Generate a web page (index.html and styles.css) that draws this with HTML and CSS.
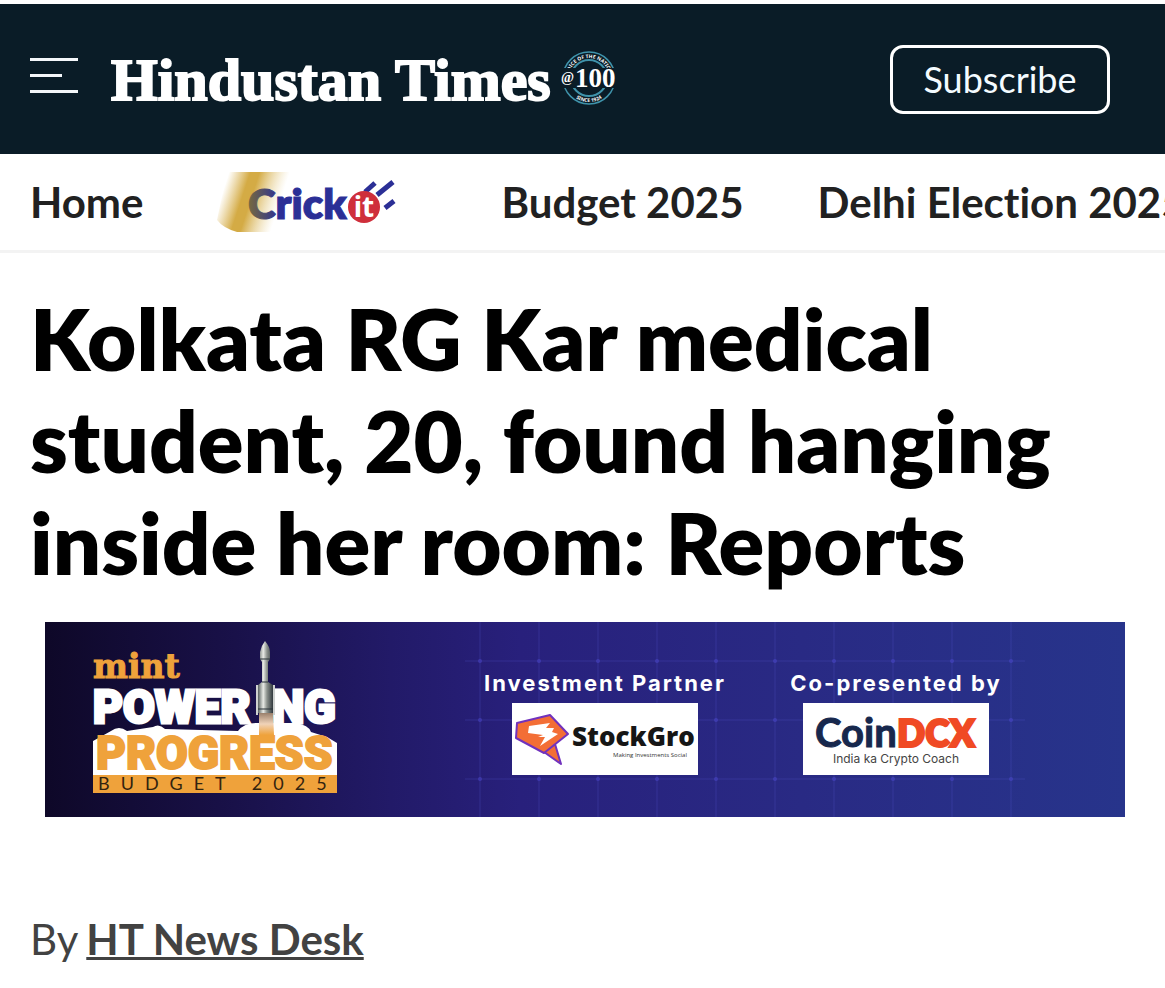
FILE: index.html
```html
<!DOCTYPE html>
<html lang="en">
<head>
  <meta charset="UTF-8">
  <meta name="viewport" content="width=device-width, initial-scale=1">
  <title>Kolkata RG Kar medical student, 20, found hanging inside her room: Reports</title>
  <link rel="stylesheet" href="styles.css">
</head>
<body>

  <header class="header">
    <button class="menu-btn" type="button" aria-label="Menu">
      <span></span><span class="short"></span><span></span>
    </button>
    <a class="logo" href="#" aria-label="Hindustan Times">
      <svg width="508" height="64" viewBox="0 0 508 64">
        <text class="logo-text" x="1" y="53">Hindustan Times</text>
        <defs>
          <path id="arcTop" d="M458.500 31.500a20 20 0 0 1 41 0"/>
          <path id="arcBottom" d="M455 31a24 24 0 0 0 48 0"/>
        </defs>
        <circle cx="479" cy="31" r="26" fill="none" stroke="#3f93ab" stroke-width="1.500"/>
        <circle cx="479" cy="31" r="18" fill="none" stroke="#3f93ab" stroke-width="2"/>
        <text class="badge-ring"><textPath href="#arcTop" startOffset="50%" text-anchor="middle">VOICE OF THE NATION</textPath></text>
        <text class="badge-ring"><textPath href="#arcBottom" startOffset="50%" text-anchor="middle">SINCE 1924</textPath></text>
        <path fill="#0a1c27" d="M451 21h55v20h-55z"/>
        <text class="badge-at" x="451" y="35">@</text>
        <text class="badge-num" x="465" y="40">100</text>
      </svg>
    </a>
    <button class="subscribe" type="button">Subscribe</button>
  </header>

  <nav class="nav">
    <a href="#">Home</a>
    <a href="#" class="crickit" aria-label="Crickit">
      <svg width="210" height="60" viewBox="0 0 210 60">
        <defs>
          <linearGradient id="gold" gradientUnits="userSpaceOnUse" x1="5" y1="22" x2="60" y2="40">
            <stop offset="0" stop-color="#d8b04c" stop-opacity="0"/>
            <stop offset="0.350" stop-color="#d4ab45"/>
            <stop offset="0.500" stop-color="#d4ab45"/>
            <stop offset="1" stop-color="#e8d294" stop-opacity="0"/>
          </linearGradient>
          <linearGradient id="ink" gradientUnits="userSpaceOnUse" x1="32" y1="0" x2="62" y2="0">
            <stop offset="0" stop-color="#75683f"/>
            <stop offset="1" stop-color="#2b2f96"/>
          </linearGradient>
        </defs>
        <path d="M10 0H76V60H20Q6 56 0 48Z" fill="url(#gold)"/>
        <text class="crick" x="31" y="47" fill="url(#ink)" stroke="url(#ink)">Crick</text>
        <g stroke="#2b2f96" stroke-width="5">
          <path d="M148 20l10-9M160 23l16-13M168 36l9-7"/>
        </g>
        <circle cx="147" cy="35" r="16" fill="#cf2f3b"/>
        <text class="it" x="147" y="45" text-anchor="middle">it</text>
      </svg>
    </a>
    <a href="#">Budget 2025</a>
    <a href="#">Delhi Election 2025</a>
  </nav>

  <main class="story">
    <h1>Kolkata RG Kar medical student, 20, found hanging inside her room: Reports</h1>

    <a class="banner" href="#">
      <svg class="banner-grid" aria-hidden="true">
        <defs>
          <pattern id="cells" width="59" height="59" patternUnits="userSpaceOnUse" x="52" y="10">
            <path d="M29 0V59M0 29H59" stroke="#5050c8" stroke-opacity="0.150" stroke-width="2"/>
            <circle cx="29" cy="29" r="2" fill="#5450e0" fill-opacity="0.400"/>
          </pattern>
        </defs>
        <rect x="420" width="560" height="100%" fill="url(#cells)"/>
      </svg>

      <svg class="mint" width="244" height="154" viewBox="0 0 244 154">
        <defs>
          <linearGradient id="metal" x1="0" x2="1">
            <stop offset="0" stop-color="#57605f"/>
            <stop offset="0.350" stop-color="#e9ebe6"/>
            <stop offset="0.600" stop-color="#8b918c"/>
            <stop offset="1" stop-color="#30383d"/>
          </linearGradient>
          <linearGradient id="flame" x1="0" y1="0" x2="0" y2="1">
            <stop offset="0" stop-color="#9a806c"/>
            <stop offset="0.500" stop-color="#f0d3b8"/>
            <stop offset="1" stop-color="#efa23b"/>
          </linearGradient>
        </defs>
        <path fill="#fff" d="M0 102L18 92Q26 86 34 92L60 88Q66 84 72 90L145 92Q151 84 163 84H202Q216 86 218 93L234 98L244 104V138H0Z"/>
        <text class="mint-name" x="0" y="39">mint</text>
        <text class="power" x="0" y="84">POWER</text>
        <text class="power" x="179" y="84">NG</text>
        <text class="progress" x="3" y="130">PROGRESS</text>
        <rect y="136" width="244" height="18" fill="#efa23b"/>
        <text class="budget" x="5" y="151">BUDGET 2025</text>
        <path fill="url(#flame)" d="M166 74h14l1 22h-15z"/>
        <path fill="url(#metal)" d="M172 2Q177 8 177 13V20L175 23V43L180 46V74H165V46L169 43V23L167 20V13Q168 7 172 2Z"/>
        <path stroke="#cfd2d0" stroke-width="2" d="M164 46v30M181 46v30"/>
        <path stroke="#263036" d="M167 20h10M169 43h6M165 70h15"/>
      </svg>

      <span class="partner">
        <span class="partner-label">Investment Partner</span>
        <svg class="card" width="186" height="72" viewBox="0 0 186 72">
          <g stroke="#7132bd" stroke-width="2" stroke-linejoin="round" fill="#f36e36">
            <path d="M43 41L49 61L32 49Z"/>
            <path d="M5 20L38 12L56 31L32 50L4 35Z"/>
          </g>
          <path fill="#fff" d="M17 23L38 20L34 25H42L40 29L46 31L28 43L33 34H26L31 32L16 30Z"/>
          <text class="stockgro" x="60" y="43">StockGro</text>
          <text class="stock-sub" x="101" y="54">Making Investments Social</text>
        </svg>
      </span>

      <span class="partner">
        <span class="partner-label">Co-presented by</span>
        <svg class="card" width="186" height="72" viewBox="0 0 186 72">
          <text class="coin" x="12" y="44">Coin</text>
          <text class="dcx" x="94" y="44">DCX</text>
          <text class="coin-sub" x="93" y="60" text-anchor="middle">India ka Crypto Coach</text>
        </svg>
      </span>
    </a>

    <p class="byline"><span>By</span> <a href="#">HT News Desk</a></p>
  </main>

</body>
</html>
```
FILE: styles.css
```css
* {
  box-sizing: border-box;
}
body {
  margin: 0;
  padding-top: 4px;
  background: #fff;
  font-family: Lato, sans-serif;
  font-variant-ligatures: none;
  overflow-x: hidden;
}
svg {
  display: block;
}
.header {
  display: flex;
  align-items: center;
  height: 150px;
  padding: 0 55px 0 30px;
  background: #0a1c27;
}
.menu-btn {
  display: flex;
  flex-direction: column;
  gap: 13px;
  width: 48px;
  margin: 0 32px 8px 0;
  padding: 0;
  border: 0;
  background: none;
  cursor: pointer;
}
.menu-btn span {
  width: 48px;
  height: 3px;
  background: #f4f7fa;
}
.menu-btn .short {
  width: 32px;
}
.logo-text {
  font: bold 60px "Liberation Serif", serif;
  fill: #fff;
  stroke: #fff;
  stroke-width: 2px;
}
.badge-ring {
  font: bold 5px "Noto Sans", sans-serif;
  fill: #fff;
}
.badge-at {
  font: bold 14px "Liberation Serif", serif;
  fill: #fff;
}
.badge-num {
  font: bold 27px "Liberation Serif", serif;
  fill: #fff;
}
.subscribe {
  margin-left: auto;
  width: 220px;
  height: 69px;
  border: 3px solid #fff;
  border-radius: 13px;
  background: none;
  color: #f4fbff;
  font: 36px Lato, sans-serif;
  cursor: pointer;
}
.nav {
  display: flex;
  align-items: center;
  gap: 74px;
  height: 99px;
  padding: 0 30px;
  border-bottom: 3px solid #f3f3f3;
  overflow: hidden;
}
.nav a {
  flex: none;
  color: #212121;
  font-size: 42px;
  font-weight: 700;
  text-decoration: none;
  white-space: nowrap;
}
.crick {
  font: 800 42px Lato, sans-serif;
  stroke-width: 1px;
}
.it {
  font: bold 28px "Noto Sans", sans-serif;
  fill: #fff;
}
.story {
  padding: 34px 30px;
}
h1 {
  margin: 0;
  color: #000;
  font-size: 85px;
  font-weight: 800;
  line-height: 102px;
}
.banner {
  position: relative;
  display: flex;
  align-items: center;
  height: 195px;
  margin: 29px 10px 0 15px;
  padding-left: 48px;
  background: linear-gradient(90deg, #0e0828 0%, #181046 16%, #221a68 32%, #28207c 44%, #292a84 70%, #27348b 100%);
  text-decoration: none;
}
.banner-grid {
  position: absolute;
  inset: 0;
  width: 100%;
  height: 100%;
}
.mint {
  position: relative;
  flex: none;
  margin: 0 147px 8px 0;
}
.mint-name {
  font: 900 33px "DejaVu Serif", serif;
  fill: #efa23b;
  stroke: #efa23b;
}
.power, .progress {
  font: 900 46px Roboto, sans-serif;
  fill: #fff;
  stroke: #fff;
  stroke-width: 3px;
}
.progress {
  fill: #efa23b;
  stroke: #efa23b;
  stroke-width: 2px;
}
.budget {
  font: 18px Lato, sans-serif;
  letter-spacing: 11px;
  fill: #33240f;
}
.partner {
  position: relative;
  display: flex;
  flex-direction: column;
  align-items: center;
  gap: 7px;
  width: 242px;
  margin: 5px 49px 0 0;
}
.partner-label {
  color: #fff;
  font: 700 22px/26px Inter, sans-serif;
  letter-spacing: 2px;
  white-space: nowrap;
}
.card {
  background: #fff;
}
.stockgro {
  font: 800 26px "Open Sans", sans-serif;
  fill: #161616;
}
.stock-sub {
  font: 6px "Open Sans", sans-serif;
  fill: #333;
}
.coin {
  font: bold 40px Lato, sans-serif;
  fill: #17284d;
  stroke: #17284d;
}
.dcx {
  font: 800 37px Lato, sans-serif;
  fill: #f04a24;
  stroke: #f04a24;
  stroke-width: 2px;
}
.coin-sub {
  font: 12px Inter, sans-serif;
  fill: #444;
}
.byline {
  display: flex;
  gap: 8px;
  margin: 97px 0 0;
  color: #424242;
  font-size: 42px;
  line-height: 50px;
}
.byline a {
  color: #424242;
  font-weight: 700;
  text-decoration: underline;
  text-decoration-thickness: 3px;
}
```
